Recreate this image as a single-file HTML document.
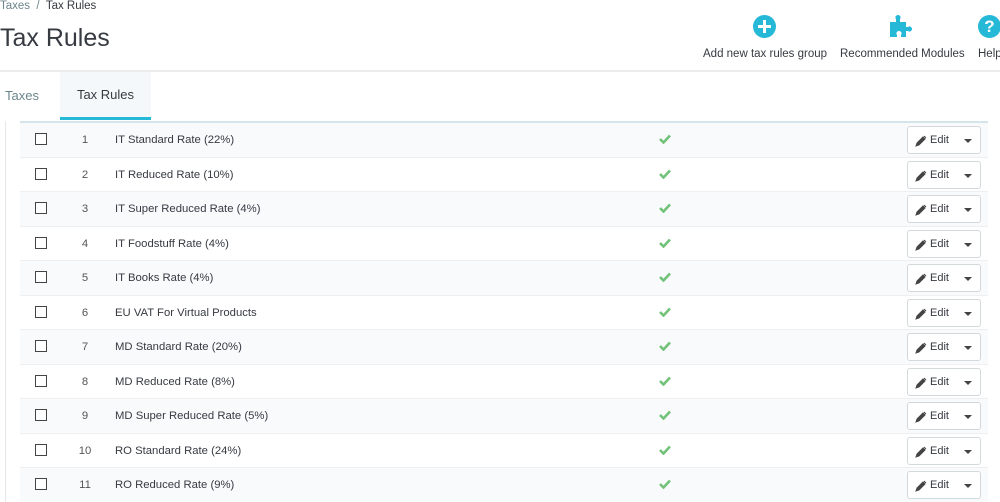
<!DOCTYPE html>
<html><head><style>
html,body{margin:0;width:1000px;height:502px;overflow:hidden}
body{background:#fff;font-family:"Liberation Sans",sans-serif;color:#363a41;position:relative}
.a{position:absolute}
.bc{left:0;top:0;font-size:11.5px;color:#6c868e}
.bc b{font-weight:normal;color:#363a41}
h1{position:absolute;left:0;top:24px;margin:0;font-weight:normal;font-size:25px;color:#363a41}
.tb{font-size:11.5px;color:#363a41;text-align:center;position:absolute;top:48px}
.ic{position:absolute;top:15px;width:23px;height:23px;border-radius:50%;background:#25b9d7}
.hline{left:0;top:70px;width:1000px;height:2px;background:#ececec}
.tab{top:72px;height:47px;line-height:47px;font-size:13px}
.panel{left:5px;top:121px;width:995px;height:400px;border-left:1px solid #e4e8ea}
.tbl{left:20px;top:121px;width:968px;border-top:2px solid #d6e4ec}
.row{position:relative;height:33.5px;border-bottom:1px solid #edeff0;font-size:11.3px}
.row:nth-child(odd){background:#f8fafc}
.cb{position:absolute;left:15px;top:10px;width:10px;height:10px;border:1.5px solid #444;background:#fff}
.n{position:absolute;left:45px;width:40px;text-align:center;top:11px;color:#555}
.nm{position:absolute;left:95px;top:11px}
.ck{position:absolute;left:639px;top:11px}
.ed{position:absolute;left:887px;top:3px;width:74px;height:28px;border:1px solid #d3d8db;border-radius:3px;background:#fff;box-sizing:border-box}
.ed span{position:absolute;left:22px;top:7px;font-size:11px}
.ed svg{position:absolute;left:7px;top:8px}
.ed i{position:absolute;left:56px;top:12px;border-left:4px solid transparent;border-right:4px solid transparent;border-top:4px solid #444}
</style></head><body>
<div class="a bc">Taxes &nbsp;/&nbsp; <b>Tax Rules</b></div>
<h1>Tax Rules</h1>
<div class="ic" style="left:753px"><div class="a" style="left:5px;top:10px;width:13px;height:3px;background:#fff"></div><div class="a" style="left:10px;top:5px;width:3px;height:13px;background:#fff"></div></div>
<svg class="a" style="left:888px;top:14px" width="26" height="24" viewBox="0 0 26 24"><path d="M2 8h6V5a2.5 2.5 0 1 1 4 0v3h6v5h2a2.5 2.5 0 1 1 0 4h-2v6h-5v-2a2.5 2.5 0 1 0-4 0v2H2z" fill="#25b9d7"/></svg>
<div class="ic" style="left:978px;font:bold 17px 'Liberation Sans';color:#fff;text-align:center;line-height:23px">?</div>
<div class="tb" style="left:703px">Add new tax rules group</div>
<div class="tb" style="left:840px">Recommended Modules</div>
<div class="tb" style="left:978px">Help</div>
<div class="a hline"></div>
<div class="a tab" style="left:5px;color:#6c868e">Taxes</div>
<div class="a tab" style="left:60px;width:91px;background:#f4f8fb;text-align:center;border-bottom:3px solid #25b9d7;height:45px;line-height:45px;top:72px">Tax Rules</div>
<div class="a panel"></div>
<div class="a tbl">
<div class="row"><div class="cb"></div><div class="n">1</div><div class="nm">IT Standard Rate (22%)</div><svg class="ck" width="12" height="10" viewBox="0 0 12 10"><path d="M1 5l3.5 3.5L11 1.5" fill="none" stroke="#72c279" stroke-width="2.6"/></svg><div class="ed"><svg width="12" height="12" viewBox="0 0 12 12"><path d="M1 11l1-3 6-6 2 2-6 6z M9 1l2 2" fill="#444" stroke="#444"/></svg><span>Edit</span><i></i></div></div>
<div class="row"><div class="cb"></div><div class="n">2</div><div class="nm">IT Reduced Rate (10%)</div><svg class="ck" width="12" height="10" viewBox="0 0 12 10"><path d="M1 5l3.5 3.5L11 1.5" fill="none" stroke="#72c279" stroke-width="2.6"/></svg><div class="ed"><svg width="12" height="12" viewBox="0 0 12 12"><path d="M1 11l1-3 6-6 2 2-6 6z M9 1l2 2" fill="#444" stroke="#444"/></svg><span>Edit</span><i></i></div></div>
<div class="row"><div class="cb"></div><div class="n">3</div><div class="nm">IT Super Reduced Rate (4%)</div><svg class="ck" width="12" height="10" viewBox="0 0 12 10"><path d="M1 5l3.5 3.5L11 1.5" fill="none" stroke="#72c279" stroke-width="2.6"/></svg><div class="ed"><svg width="12" height="12" viewBox="0 0 12 12"><path d="M1 11l1-3 6-6 2 2-6 6z M9 1l2 2" fill="#444" stroke="#444"/></svg><span>Edit</span><i></i></div></div>
<div class="row"><div class="cb"></div><div class="n">4</div><div class="nm">IT Foodstuff Rate (4%)</div><svg class="ck" width="12" height="10" viewBox="0 0 12 10"><path d="M1 5l3.5 3.5L11 1.5" fill="none" stroke="#72c279" stroke-width="2.6"/></svg><div class="ed"><svg width="12" height="12" viewBox="0 0 12 12"><path d="M1 11l1-3 6-6 2 2-6 6z M9 1l2 2" fill="#444" stroke="#444"/></svg><span>Edit</span><i></i></div></div>
<div class="row"><div class="cb"></div><div class="n">5</div><div class="nm">IT Books Rate (4%)</div><svg class="ck" width="12" height="10" viewBox="0 0 12 10"><path d="M1 5l3.5 3.5L11 1.5" fill="none" stroke="#72c279" stroke-width="2.6"/></svg><div class="ed"><svg width="12" height="12" viewBox="0 0 12 12"><path d="M1 11l1-3 6-6 2 2-6 6z M9 1l2 2" fill="#444" stroke="#444"/></svg><span>Edit</span><i></i></div></div>
<div class="row"><div class="cb"></div><div class="n">6</div><div class="nm">EU VAT For Virtual Products</div><svg class="ck" width="12" height="10" viewBox="0 0 12 10"><path d="M1 5l3.5 3.5L11 1.5" fill="none" stroke="#72c279" stroke-width="2.6"/></svg><div class="ed"><svg width="12" height="12" viewBox="0 0 12 12"><path d="M1 11l1-3 6-6 2 2-6 6z M9 1l2 2" fill="#444" stroke="#444"/></svg><span>Edit</span><i></i></div></div>
<div class="row"><div class="cb"></div><div class="n">7</div><div class="nm">MD Standard Rate (20%)</div><svg class="ck" width="12" height="10" viewBox="0 0 12 10"><path d="M1 5l3.5 3.5L11 1.5" fill="none" stroke="#72c279" stroke-width="2.6"/></svg><div class="ed"><svg width="12" height="12" viewBox="0 0 12 12"><path d="M1 11l1-3 6-6 2 2-6 6z M9 1l2 2" fill="#444" stroke="#444"/></svg><span>Edit</span><i></i></div></div>
<div class="row"><div class="cb"></div><div class="n">8</div><div class="nm">MD Reduced Rate (8%)</div><svg class="ck" width="12" height="10" viewBox="0 0 12 10"><path d="M1 5l3.5 3.5L11 1.5" fill="none" stroke="#72c279" stroke-width="2.6"/></svg><div class="ed"><svg width="12" height="12" viewBox="0 0 12 12"><path d="M1 11l1-3 6-6 2 2-6 6z M9 1l2 2" fill="#444" stroke="#444"/></svg><span>Edit</span><i></i></div></div>
<div class="row"><div class="cb"></div><div class="n">9</div><div class="nm">MD Super Reduced Rate (5%)</div><svg class="ck" width="12" height="10" viewBox="0 0 12 10"><path d="M1 5l3.5 3.5L11 1.5" fill="none" stroke="#72c279" stroke-width="2.6"/></svg><div class="ed"><svg width="12" height="12" viewBox="0 0 12 12"><path d="M1 11l1-3 6-6 2 2-6 6z M9 1l2 2" fill="#444" stroke="#444"/></svg><span>Edit</span><i></i></div></div>
<div class="row"><div class="cb"></div><div class="n">10</div><div class="nm">RO Standard Rate (24%)</div><svg class="ck" width="12" height="10" viewBox="0 0 12 10"><path d="M1 5l3.5 3.5L11 1.5" fill="none" stroke="#72c279" stroke-width="2.6"/></svg><div class="ed"><svg width="12" height="12" viewBox="0 0 12 12"><path d="M1 11l1-3 6-6 2 2-6 6z M9 1l2 2" fill="#444" stroke="#444"/></svg><span>Edit</span><i></i></div></div>
<div class="row"><div class="cb"></div><div class="n">11</div><div class="nm">RO Reduced Rate (9%)</div><svg class="ck" width="12" height="10" viewBox="0 0 12 10"><path d="M1 5l3.5 3.5L11 1.5" fill="none" stroke="#72c279" stroke-width="2.6"/></svg><div class="ed"><svg width="12" height="12" viewBox="0 0 12 12"><path d="M1 11l1-3 6-6 2 2-6 6z M9 1l2 2" fill="#444" stroke="#444"/></svg><span>Edit</span><i></i></div></div>
</div>
</body></html>
